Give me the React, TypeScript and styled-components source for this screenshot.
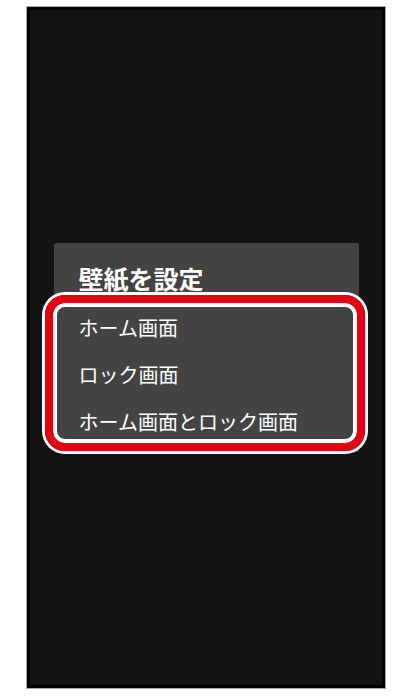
import styled, { createGlobalStyle } from 'styled-components'

const GlobalStyle = createGlobalStyle`
  html, body {
    margin: 0;
    padding: 0;
    background: #ffffff;
  }
  body {
    font-family: "Noto Sans CJK JP", "Noto Sans", sans-serif;
  }
`

const options = ['ホーム画面', 'ロック画面', 'ホーム画面とロック画面']

export default function App() {
  return (
    <>
      <GlobalStyle />
      <Page>
        <Screen>
          <Dialog>
            <Title>壁紙を設定</Title>
            {options.map(o => (
              <Option key={o}>{o}</Option>
            ))}
            <Highlight />
          </Dialog>
        </Screen>
      </Page>
    </>
  )
}

const Page = styled.div`
  width: 410px;
  height: 700px;
  padding: 7px 0 0 27px;
  box-sizing: border-box;
`

const Screen = styled.div`
  width: 358px;
  height: 681px;
  box-sizing: border-box;
  border: 3px solid #000000;
  outline: 1px solid #a8a8a8;
  background: #131313;
  display: flex;
  align-items: center;
  justify-content: center;
`

const Dialog = styled.div`
  position: relative;
  width: 305px;
  background: #434343;
  border-radius: 2px;
  padding-bottom: 7px;
  display: flex;
  flex-direction: column;
`

const Title = styled.div`
  padding: 20px 25px 0;
  margin-bottom: 11px;
  height: 30px;
  font-size: 25px;
  line-height: 30px;
  font-weight: bold;
  color: #ffffff;
`

const Option = styled.div`
  height: 47px;
  line-height: 47px;
  padding-left: 25px;
  font-size: 20px;
  color: #ffffff;
`

const Highlight = styled.div`
  position: absolute;
  left: -9px;
  top: 52px;
  width: 320px;
  height: 156px;
  box-sizing: border-box;
  border: 8px solid #e60012;
  border-radius: 20px;
  box-shadow: 0 0 0 3px #ffffff, inset 0 0 0 4px #ffffff;
  pointer-events: none;
`
